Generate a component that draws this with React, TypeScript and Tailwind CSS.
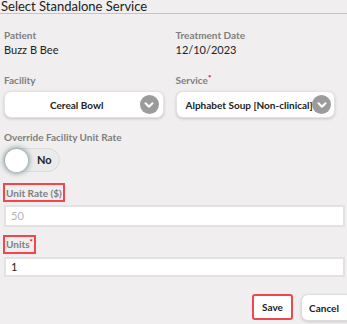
import { ChevronDown } from "lucide-react";

function Label({ children, req = false, boxed = false }: { children: string; req?: boolean; boxed?: boolean }) {
  return (
    <div
      className={
        boxed
          ? "-ml-[1px] inline-flex h-[19px] items-center border-2 border-[#f2454c] px-[1px] text-[10px] font-bold leading-[12px] text-[#7f7f7f]"
          : "h-[12px] text-[10px] font-bold leading-[12px] text-[#7f7f7f]"
      }
    >
      <span>
        {children}
        {req && <span className="relative -top-[3px] text-[8px] text-[#d0021b]">*</span>}
      </span>
    </div>
  );
}

function Chevron({ right }: { right: string }) {
  return (
    <span className={`absolute ${right} flex h-[19px] w-[19px] items-center justify-center rounded-full bg-[#9b9b9b]`}>
      <ChevronDown className="h-[14px] w-[14px] text-white" strokeWidth={3.5} />
    </span>
  );
}

export default function App() {
  return (
    <div className="h-[324px] w-[347px] overflow-hidden bg-[#f0eeee] font-['Lato',sans-serif] leading-[12px] text-[#222]">
      <div className="h-[14px] border-b border-[#c4c4c4] pl-[1px] text-[13px] leading-[13px]">Select Standalone Service</div>

      <div className="grid grid-cols-2 gap-x-[12px] pl-[4px] pr-[12px] pt-[15px]">
        <div>
          <Label>Patient</Label>
          <div className="mt-[3px] h-[12px] text-[11px] leading-[12px]">Buzz B Bee</div>
        </div>
        <div>
          <Label>Treatment Date</Label>
          <div className="mt-[3px] h-[12px] text-[11px] leading-[12px]">12/10/2023</div>
        </div>

        <div className="mt-[18px]">
          <Label>Facility</Label>
          <div className="relative mt-[5px] flex h-[27px] items-center rounded-[7px] border border-[#e2e2e2] bg-white shadow-[0_1px_3px_rgba(0,0,0,0.18)]">
            <span className="flex-1 pr-[14px] text-center text-[10px] font-bold text-[#222]">Cereal Bowl</span>
            <Chevron right="right-[4px]" />
          </div>
        </div>
        <div className="mt-[18px]">
          <Label req>Service</Label>
          <div className="relative mt-[5px] flex h-[27px] items-center rounded-[7px] border border-[#e2e2e2] bg-white shadow-[0_1px_3px_rgba(0,0,0,0.18)]">
            <span className="whitespace-nowrap pl-[9px] text-[10px] font-bold text-[#222]">Alphabet Soup [Non-clinical]</span>
            <Chevron right="right-[3px]" />
          </div>
        </div>
      </div>

      <div className="pl-[4px] pt-[13px]">
        <Label>Override Facility Unit Rate</Label>
        <div className="mt-[5px] flex h-[24px] w-[56px] items-center rounded-full border border-[#dcdcdc] bg-[#ebebeb]">
          <span className="h-[23px] w-[23px] rounded-full bg-white shadow-[0_0_4px_2px_rgba(70,105,105,0.5)]" />
          <span className="ml-[9px] text-[11px] font-bold text-[#222]">No</span>
        </div>
      </div>

      <div className="pl-[4px] pr-[2px] pt-[11px]">
        <Label boxed>Unit Rate ($)</Label>
        <div className="mt-[3px] flex h-[22px] items-center border-2 border-[#e2e2e2] bg-white pl-[5px] text-[11px] text-[#b5b5b5]">50</div>
      </div>

      <div className="pl-[4px] pr-[2px] pt-[8px]">
        <Label boxed req>Units</Label>
        <div className="mt-[3px] flex h-[20px] items-center border-2 border-[#e2e2e2] bg-white pl-[5px] text-[11px] text-[#222]">1</div>
      </div>

      <div className="mt-[17px] flex justify-end gap-[8px]">
        <button className="h-[26px] w-[41px] rounded-[3px] border-2 border-[#f2454c] bg-white text-[10px] font-bold leading-[12px] text-[#222]">Save</button>
        <button className="-mr-[6px] h-[27px] w-[52px] rounded-[7px] border border-[#dcdcdc] bg-white pr-[6px] text-[10px] font-bold leading-[12px] text-[#222] shadow-[0_1px_3px_rgba(0,0,0,0.15)]">Cancel</button>
      </div>
    </div>
  );
}
